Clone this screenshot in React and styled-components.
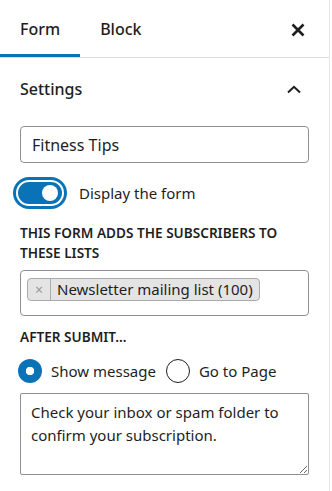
import React, { useState } from "react";
import styled, { createGlobalStyle, css } from "styled-components";

const Global = createGlobalStyle`
  html, body { margin: 0; padding: 0; background: #fff; }
  body { font-family: "Noto Sans", "Open Sans", sans-serif; color: #1e1e1e; }
  * { box-sizing: border-box; }
`;

const Sidebar = styled.div`
  width: 330px;
  height: 491px;
  border-right: 1px solid #e6e6e6;
  background: #fff;
  overflow: hidden;
`;

const TabBar = styled.div`
  display: flex;
  align-items: stretch;
  height: 58px;
  border-bottom: 1px solid #dcdcde;
`;

const Tab = styled.button`
  border: 0;
  background: none;
  padding: 0 20px;
  margin: 0;
  font-family: inherit;
  font-size: 16px;
  font-weight: 500;
  color: #1e1e1e;
  cursor: pointer;
  height: 57px;
  ${(p) =>
    p.$active &&
    css`
      box-shadow: inset 0 -3px 0 #0a73b7;
    `}
`;

const CloseButton = styled.button`
  margin-left: auto;
  margin-right: 24px;
  border: 0;
  background: none;
  padding: 2px 0 0;
  display: flex;
  align-items: center;
  color: #1e1e1e;
`;

const Body = styled.div`
  padding: 0 20px;
`;

const SectionHeader = styled.div`
  height: 62px;
  display: flex;
  align-items: center;
  justify-content: space-between;
  font-size: 16px;
  font-weight: 500;
  padding-right: 8px;
`;

const TextInput = styled.input`
  display: block;
  width: 100%;
  height: 37px;
  margin-top: 6px;
  border: 1px solid #8c8f94;
  border-radius: 4px;
  padding: 0 11px;
  font-family: inherit;
  font-size: 16px;
  color: #1e1e1e;
  outline: none;
`;

const ToggleRow = styled.label`
  display: flex;
  align-items: center;
  gap: 17px;
  margin-top: 17px;
  height: 26px;
  font-size: 15px;
`;

const Track = styled.span`
  position: relative;
  display: inline-block;
  width: 44px;
  height: 22px;
  border-radius: 11px;
  background: #0a73b7;
  box-shadow: 0 0 0 2px #fff, 0 0 0 5px #0a73b7;
  margin-left: -2px;
`;

const Knob = styled.span`
  position: absolute;
  top: 3px;
  right: 4px;
  width: 16px;
  height: 16px;
  border-radius: 50%;
  background: #fff;
`;

const FieldLabel = styled.div`
  font-size: 13.6px;
  font-weight: 600;
  text-transform: uppercase;
  line-height: 20px;
  margin-top: ${(p) => p.$top}px;
`;

const TokenBox = styled.div`
  margin-top: 7px;
  height: 46px;
  border: 1px solid #8c8f94;
  border-radius: 4px;
  padding: 7px 6px;
  display: flex;
  align-items: flex-start;
`;

const Token = styled.span`
  display: inline-flex;
  align-items: stretch;
  height: 23px;
  border: 1px solid #aaa;
  border-radius: 4px;
  background: #e4e4e4;
  font-size: 15px;
  line-height: 21px;
`;

const TokenRemove = styled.span`
  width: 23px;
  display: flex;
  align-items: center;
  justify-content: center;
  color: #999;
  font-size: 14px;
  border-right: 1px solid #aaa;
`;

const TokenText = styled.span`
  padding: 0 6px;
`;

const RadioRow = styled.div`
  display: flex;
  align-items: center;
  margin-top: 12px;
  height: 24px;
  font-size: 15px;
  margin-left: -2px;
`;

const RadioOption = styled.label`
  display: flex;
  align-items: center;
  gap: 9px;
  margin-right: ${(p) => p.$gap || 0}px;
`;

const RadioDot = styled.span`
  width: 24px;
  height: 24px;
  border-radius: 50%;
  ${(p) =>
    p.$checked
      ? css`
          background: radial-gradient(circle, #fff 0 4px, #0a73b7 4.5px);
        `
      : css`
          border: 1px solid #1e1e1e;
          background: #fff;
        `}
`;

const TextArea = styled.textarea`
  display: block;
  width: 100%;
  height: 82px;
  margin-top: 10px;
  border: 1px solid #8c8f94;
  border-radius: 2px;
  padding: 7px 10px;
  font-family: inherit;
  font-size: 15px;
  line-height: 23px;
  color: #1e1e1e;
  resize: vertical;
  outline: none;
`;

export default function App() {
  const [choice, setChoice] = useState("message");
  return (
    <>
      <Global />
      <Sidebar>
        <TabBar>
          <Tab $active>Form</Tab>
          <Tab>Block</Tab>
          <CloseButton aria-label="Close">
            <svg width="14" height="14" viewBox="0 0 14 14">
              <path d="M1.5 1.5 L12.5 12.5 M12.5 1.5 L1.5 12.5" stroke="#1e1e1e" strokeWidth="2.6" />
            </svg>
          </CloseButton>
        </TabBar>
        <Body>
          <SectionHeader>
            Settings
            <svg width="14" height="9" viewBox="0 0 14 9">
              <path d="M1 7.5 L7 1.8 L13 7.5" fill="none" stroke="#1e1e1e" strokeWidth="2" />
            </svg>
          </SectionHeader>
          <TextInput defaultValue="Fitness Tips" />
          <ToggleRow>
            <Track>
              <Knob />
            </Track>
            Display the form
          </ToggleRow>
          <FieldLabel $top={17}>This form adds the subscribers to these lists</FieldLabel>
          <TokenBox>
            <Token>
              <TokenRemove>×</TokenRemove>
              <TokenText>Newsletter mailing list (100)</TokenText>
            </Token>
          </TokenBox>
          <FieldLabel $top={11}>After submit...</FieldLabel>
          <RadioRow>
            <RadioOption $gap={10} onClick={() => setChoice("message")}>
              <RadioDot $checked={choice === "message"} />
              Show message
            </RadioOption>
            <RadioOption onClick={() => setChoice("page")}>
              <RadioDot $checked={choice === "page"} />
              Go to Page
            </RadioOption>
          </RadioRow>
          <TextArea defaultValue="Check your inbox or spam folder to confirm your subscription." />
        </Body>
      </Sidebar>
    </>
  );
}
